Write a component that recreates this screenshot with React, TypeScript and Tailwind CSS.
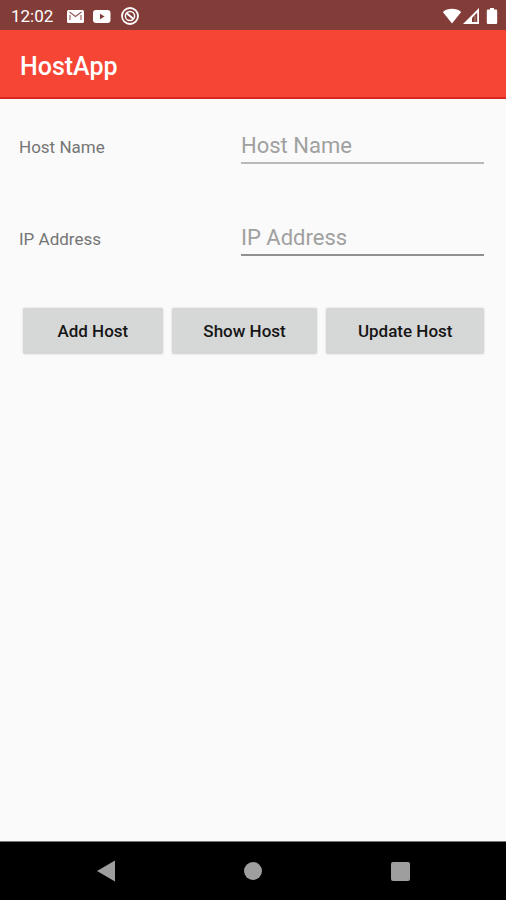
import React from "react";

function StatusBar() {
  return (
    <div className="flex h-[30px] items-center justify-between bg-[#833d39] pl-[11px] pr-2 pt-px text-white">
      <div className="flex items-center">
        <span className="mr-[13px] text-[17px] leading-7">12:02</span>
        <svg className="mr-2 h-[18px] w-[18px]" viewBox="0 0 18 18" aria-label="Mail">
          <rect x="1" y="3" width="17" height="13" rx="1.5" fill="#fff" />
          <path d="M3.500 5l6 4.500 6-4.500M4 8v5M15 8v5" fill="none" stroke="#833d39" strokeWidth="1.1" strokeOpacity=".85" />
        </svg>
        <svg className="mr-2 h-[18px] w-5" viewBox="0 0 20 18" aria-label="Video">
          <rect x="1" y="3" width="17.5" height="13" rx="3" fill="#fff" />
          <path d="M8 6.800v5.400l4.600-2.700z" fill="#833d39" />
        </svg>
        <svg className="h-5 w-5" viewBox="0 0 20 20" fill="none" stroke="#fff" aria-label="Notification">
          <circle cx="10" cy="10" r="8" strokeWidth="1.800" />
          <circle cx="10" cy="10" r="4.600" strokeWidth="1.500" />
          <path d="M6.500 7l7 6" strokeWidth="1.900" />
        </svg>
      </div>
      <div className="flex items-center">
        <svg className="h-[18px] w-5" viewBox="0 0 20 18" aria-label="Wi-Fi">
          <path d="M.8 5C5.5.8 14.500.8 19.200 5L10 16.500z" fill="#fff" />
        </svg>
        <svg className="mr-[6px] h-[18px] w-[18px]" viewBox="0 0 18 18" aria-label="Signal">
          <path fillRule="evenodd" d="M17 1v16H1zM15.200 5.500L10 11v4h5.200z" fill="#fff" />
          <path d="M13 9v6" stroke="#fff" strokeOpacity=".35" />
        </svg>
        <svg className="h-[18px] w-3" viewBox="0 0 12 18" aria-label="Battery">
          <path d="M4 1h4v1.500h2q1.200 0 1.200 1.200v12q0 1.300-1.200 1.300H2q-1.200 0-1.200-1.300v-12Q.8 2.500 2 2.500h2z" fill="#fff" />
        </svg>
      </div>
    </div>
  );
}

function Field({ id, label, lineClass }: { id: string; label: string; lineClass: string }) {
  return (
    <div className="flex items-center">
      <label htmlFor={id} className="flex-1 pt-[2px] text-[17px] leading-6 text-[#757575]">
        {label}
      </label>
      <input
        id={id}
        type="text"
        placeholder={label}
        className={`h-9 w-[243px] border-b-2 bg-transparent text-[22px] text-[#333] outline-none placeholder:text-[#a0a0a0] ${lineClass}`}
      />
    </div>
  );
}

function ActionButton({ grow, children }: { grow: string; children: React.ReactNode }) {
  return (
    <button
      type="button"
      className={`h-[46px] rounded-xs bg-[#d6d8d7] pt-[2px] text-[17px] font-medium text-[#161616] shadow-[0_0_2px_rgba(0,0,0,0.2)] ${grow}`}
    >
      {children}
    </button>
  );
}

export default function App() {
  return (
    <div className="flex min-h-screen flex-col bg-[#fafafa] font-['Roboto',sans-serif]">
      <StatusBar />
      <header className="flex h-[69px] items-center border-b-2 border-[#d9281f] bg-[#f64435] px-5 pt-[6px]">
        <h1 className="text-[25px] font-medium leading-8 text-white">HostApp</h1>
      </header>
      <main className="flex-1 pl-[19px] pr-[22px] pt-[29px]">
        <form>
          <div className="flex flex-col gap-14">
            <Field id="host-name" label="Host Name" lineClass="border-[#b8b8b8]" />
            <Field id="ip-address" label="IP Address" lineClass="border-[#909090]" />
          </div>
          <div className="mt-[52px] flex gap-[9px] pl-1">
            <ActionButton grow="flex-[140]">Add Host</ActionButton>
            <ActionButton grow="flex-[146]">Show Host</ActionButton>
            <ActionButton grow="flex-[158]">Update Host</ActionButton>
          </div>
        </form>
      </main>
      <nav className="grid h-[59px] grid-cols-3 items-center border-t border-[#777] bg-black px-8">
        <button type="button" aria-label="Back" className="flex justify-center">
          <svg className="h-[22px] w-5" viewBox="0 0 20 22">
            <path d="M19 .5v21L1 11z" fill="#9e9e9e" />
          </svg>
        </button>
        <button type="button" aria-label="Home" className="flex justify-center">
          <span className="h-[18px] w-[18px] rounded-full bg-[#9e9e9e]" />
        </button>
        <button type="button" aria-label="Recent apps" className="flex justify-center">
          <span className="h-[19px] w-[19px] rounded-xs bg-[#9e9e9e]" />
        </button>
      </nav>
    </div>
  );
}
